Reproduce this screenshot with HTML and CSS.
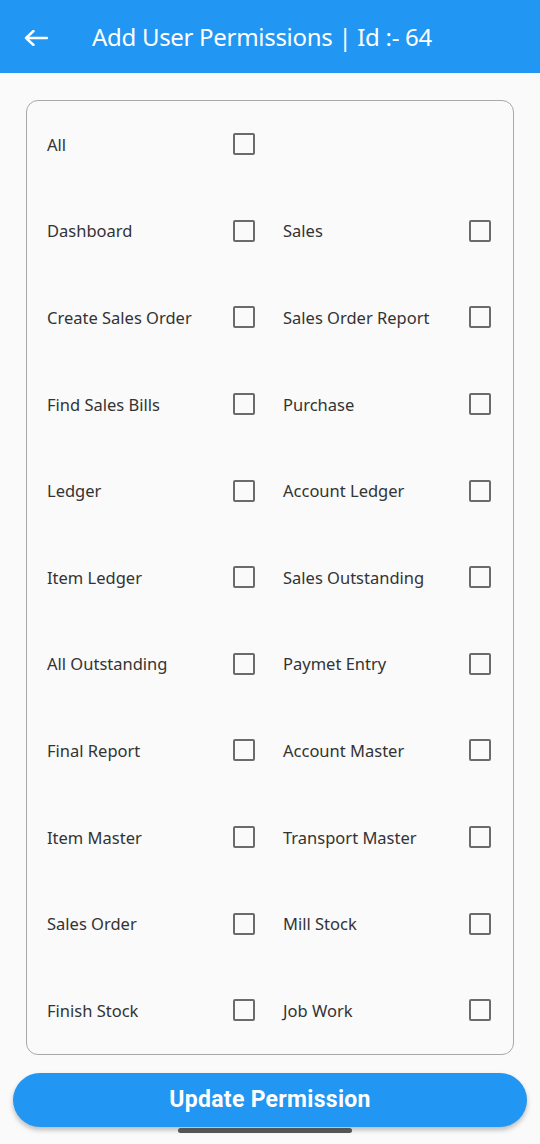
FILE: index.html
```html
<!DOCTYPE html>
<html>
<head>
   <link rel="stylesheet" href="styles.css">
</head>
<body>
   <header class="app-bar">
      <svg class="back-icon" viewBox="0 0 24 16" width="24" height="16">
         <path d="M2 8H23M9.5 1L2 8l7.5 7" fill="none" stroke="#fff" stroke-width="2.4" stroke-linecap="round" stroke-linejoin="round"/>
      </svg>
      <h1 class="title">Add User Permissions | Id :- 64</h1>
   </header>

   <main class="content">
      <div class="perm-card">
         <div class="perm"><span>All</span><span class="box"></span></div>
         <div class="perm empty"></div>

         <div class="perm"><span>Dashboard</span><span class="box"></span></div>
         <div class="perm"><span>Sales</span><span class="box"></span></div>

         <div class="perm"><span>Create Sales Order</span><span class="box"></span></div>
         <div class="perm"><span>Sales Order Report</span><span class="box"></span></div>

         <div class="perm"><span>Find Sales Bills</span><span class="box"></span></div>
         <div class="perm"><span>Purchase</span><span class="box"></span></div>

         <div class="perm"><span>Ledger</span><span class="box"></span></div>
         <div class="perm"><span>Account Ledger</span><span class="box"></span></div>

         <div class="perm"><span>Item Ledger</span><span class="box"></span></div>
         <div class="perm"><span>Sales Outstanding</span><span class="box"></span></div>

         <div class="perm"><span>All Outstanding</span><span class="box"></span></div>
         <div class="perm"><span>Paymet Entry</span><span class="box"></span></div>

         <div class="perm"><span>Final Report</span><span class="box"></span></div>
         <div class="perm"><span>Account Master</span><span class="box"></span></div>

         <div class="perm"><span>Item Master</span><span class="box"></span></div>
         <div class="perm"><span>Transport Master</span><span class="box"></span></div>

         <div class="perm"><span>Sales Order</span><span class="box"></span></div>
         <div class="perm"><span>Mill Stock</span><span class="box"></span></div>

         <div class="perm"><span>Finish Stock</span><span class="box"></span></div>
         <div class="perm"><span>Job Work</span><span class="box"></span></div>
      </div>

      <button class="update-btn">Update Permission</button>
   </main>

   <div class="home-bar"></div>
</body>
</html>
```

FILE: styles.css
```css
body {
   margin: 0;
   background-color: #fafafa;
   font-family: 'Noto Sans', sans-serif;
   height: 1144px;
   position: relative;
   overflow: hidden;
}

.app-bar {
   height: 73px;
   background-color: #2196f3;
   display: flex;
   align-items: center;
   padding-left: 24px;
}

.back-icon {
   display: block;
   margin-top: 2px;
}

.title {
   margin: 0 0 0 44px;
   color: #fff;
   font-weight: normal;
   font-size: 24px;
   letter-spacing: -0.3px;
}

.content {
   padding: 27px 0 0;
}

.perm-card {
   margin: 0 26px;
   box-sizing: border-box;
   border: 1px solid #a8a8a8;
   border-radius: 12px;
   padding: 0 22px 0 20px;
   display: grid;
   grid-template-columns: 1fr 1fr;
   grid-auto-rows: 86.6px;
   column-gap: 28px;
}

.perm {
   display: flex;
   align-items: center;
   justify-content: space-between;
   font-size: 16.5px;
   color: #333;
}

.box {
   width: 22px;
   height: 22px;
   box-sizing: border-box;
   border: 2px solid #6b6b6b;
   border-radius: 2px;
}

.update-btn {
   display: block;
   margin: 18px 13px 0;
   width: 514px;
   height: 54px;
   border: none;
   border-radius: 27px;
   background-color: #2196f3;
   color: #fff;
   font-family: Roboto, sans-serif;
   font-weight: bold;
   font-size: 23px;
   letter-spacing: 0.3px;
   box-shadow: 0 3px 5px rgba(0, 0, 0, 0.25);
}

.home-bar {
   position: absolute;
   left: 178px;
   top: 1128px;
   width: 174px;
   height: 5px;
   border-radius: 3px;
   background-color: #555;
}
```
